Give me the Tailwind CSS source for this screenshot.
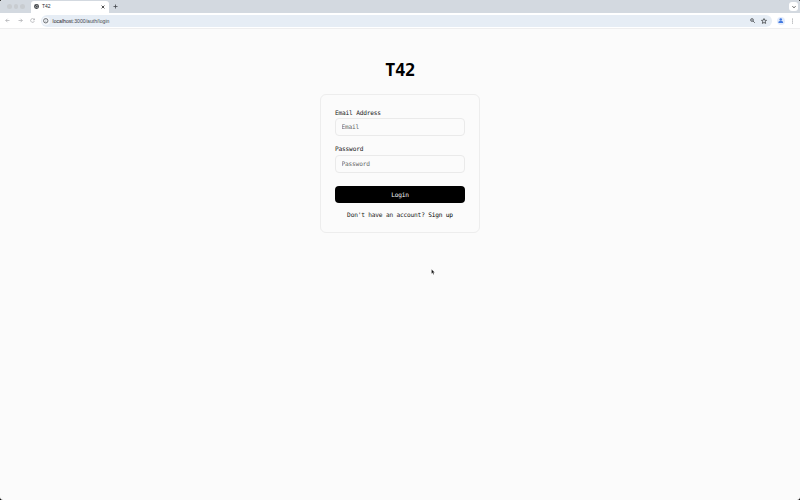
<!DOCTYPE html>
<html lang="en">
<head>
<meta charset="utf-8">
<title>T42</title>
<script src="https://cdn.jsdelivr.net/npm/@tailwindcss/browser@4"></script>
</head>
<body class="bg-black">
<div class="relative flex h-[500px] w-[800px] flex-col overflow-hidden rounded-[3px] bg-[#fbfbfb] font-['Liberation_Sans',sans-serif]">
  <header class="h-[29px] shrink-0 border-b border-[#eeeeef] bg-white">
    <div class="flex h-[13px] items-end bg-[#d3d9e0] pr-[2px] pl-[7px]">
      <div class="flex h-[13px] w-[24px] items-center gap-[2px]">
        <span class="size-[4.5px] rounded-full bg-[#c8ccd0]"></span>
        <span class="size-[4.5px] rounded-full bg-[#c8ccd0]"></span>
        <span class="size-[4.5px] rounded-full bg-[#c8ccd0]"></span>
      </div>
      <div class="flex h-[12px] w-[78px] items-center rounded-t-[3px] bg-white pr-[4px] pb-[1px] pl-[3px]">
        <svg class="size-[5px]" viewBox="0 0 10 10"><circle cx="5" cy="5" r="4.9" fill="#2f3337"/><path d="M1.3 4.5L4 5.6v2.7M4.4 1.2L4.2 3l2 .8L8 3M6 8l.3-2 2.2-.7" fill="none" stroke="#fff" stroke-width="1"/></svg>
        <span class="ml-[3px] flex-1 text-[5px] leading-none text-[#2c2f33]">T42</span>
        <svg class="size-[4px]" viewBox="0 0 8 8"><path d="M1.2 1.2l5.6 5.6M6.8 1.2L1.2 6.8" stroke="#222" stroke-width="1.6"/></svg>
      </div>
      <svg class="mb-[4px] ml-[4px] size-[5px]" viewBox="0 0 10 10"><path d="M5 1v8M1 5h8" stroke="#44484d" stroke-width="1.6"/></svg>
      <span class="mb-[2px] ml-auto flex size-[9px] items-center justify-center rounded-[3px] bg-white"><svg class="size-[4px]" viewBox="0 0 8 8"><path d="M1 2.5l3 3 3-3" fill="none" stroke="#222" stroke-width="1.6"/></svg></span>
    </div>
    <div class="flex h-[15.5px] items-center pr-[5px] pl-[5px]">
      <div class="flex w-[36px] gap-[7.5px]">
        <svg class="size-[5px]" viewBox="0 0 10 10" fill="none" stroke="#a0a3a7" stroke-width="1.3"><path d="M9 5H1.5M5 1.5L1.5 5 5 8.5"/></svg>
        <svg class="size-[5px]" viewBox="0 0 10 10" fill="none" stroke="#a0a3a7" stroke-width="1.3"><path d="M1 5h7.5M5 1.5L8.5 5 5 8.5"/></svg>
        <svg class="size-[5px]" viewBox="0 0 10 10" fill="none" stroke="#a0a3a7" stroke-width="1.3"><path d="M8.7 6A3.8 3.8 0 1 1 8 2.5L9 3.5M9 1v2.7H6.3"/></svg>
      </div>
      <div class="flex h-[11.5px] w-[731px] items-center rounded-full bg-[#e6edf5] pr-[5px] pl-[1px]">
        <span class="flex size-[8px] items-center justify-center rounded-full bg-[#f5f8fb]"><svg class="size-[5.5px]" viewBox="0 0 10 10"><circle cx="5" cy="5" r="4" fill="none" stroke="#55595e" stroke-width="1.5"/><path d="M5 4.5v3M5 2.5v1" stroke="#8a8e93" stroke-width="1"/></svg></span>
        <span class="mt-[1px] ml-[2.5px] flex-1 text-[5.15px] leading-none whitespace-nowrap text-[#44484e]"><span class="text-[#1f2226]">localhost</span>:3000/auth/login</span>
        <svg class="mr-[6px] size-[5px]" viewBox="0 0 10 10" fill="none" stroke="#45494e"><circle cx="4" cy="4" r="2.9" stroke-width="1.4"/><path d="M6.2 6.2L9.5 9.5" stroke-width="1.7"/><path d="M2.5 4h3M4 2.5v3" stroke-width=".9"/></svg>
        <svg class="size-[6px]" viewBox="0 0 10 10"><path d="M5 .9l1.2 2.8 3 .3L7 6l.7 3L5 7.5 2.3 9 3 6 .8 4l3-.3z" fill="none" stroke="#3c4043" stroke-width="1.3"/></svg>
      </div>
      <span class="ml-[5px] flex size-[8px] items-center justify-center rounded-full bg-[#e2ebfb]"><svg class="size-[5.5px]" viewBox="0 0 10 10" fill="#4279e0"><circle cx="5" cy="2.8" r="2.3"/><path d="M.8 9.3V7.5C.8 5 9.2 5 9.2 7.5v1.8z"/></svg></span>
      <svg class="ml-auto h-[6px] w-[5px]" viewBox="0 0 10 12" fill="#777b80"><circle cx="5" cy="2" r="1"/><circle cx="5" cy="6" r="1"/><circle cx="5" cy="10" r="1"/></svg>
    </div>
  </header>
  <main class="flex flex-col items-center pt-[29px] font-['DejaVu_Sans_Mono',monospace] text-[6.2px] leading-[8px] tracking-[-0.2px] text-[#222]">
    <h1 class="text-[17.5px] leading-[24px] font-bold tracking-[-0.6px] text-black">T42</h1>
    <form class="mt-[12px] flex h-[139px] w-[160px] flex-col rounded-[6px] border border-[#ededed] px-[14px] pt-[14px]">
      <label for="email">Email Address</label>
      <input id="email" type="email" placeholder="Email" class="mt-[1px] h-[18px] w-full rounded-[4px] border border-[#eaeaea] px-[5.5px] pb-[1px] tracking-[-0.2px] placeholder:text-[#6a6a6a]">
      <label for="password" class="mt-[9px]">Password</label>
      <input id="password" type="password" placeholder="Password" class="mt-[2px] h-[18px] w-full rounded-[4px] border border-[#eaeaea] px-[5.5px] pb-[1px] tracking-[-0.2px] placeholder:text-[#6a6a6a]">
      <button type="button" class="mt-[13px] h-[17px] w-full rounded-[4px] bg-black tracking-[-0.2px] text-[#f5f5f5]">Login</button>
      <p class="mt-[8px] text-center whitespace-nowrap">Don't have an account? <a class="font-medium text-black">Sign up</a></p>
    </form>
  </main>
  <svg class="absolute top-[269px] left-[431px] h-[6px] w-[4px]" viewBox="0 0 8 12"><path d="M1 .5v9l2-1.8L4.5 11l1.6-.7-1.4-3.1h2.8z" fill="#111" stroke="#fff" stroke-width=".5"/></svg>
</div>
</body>
</html>
